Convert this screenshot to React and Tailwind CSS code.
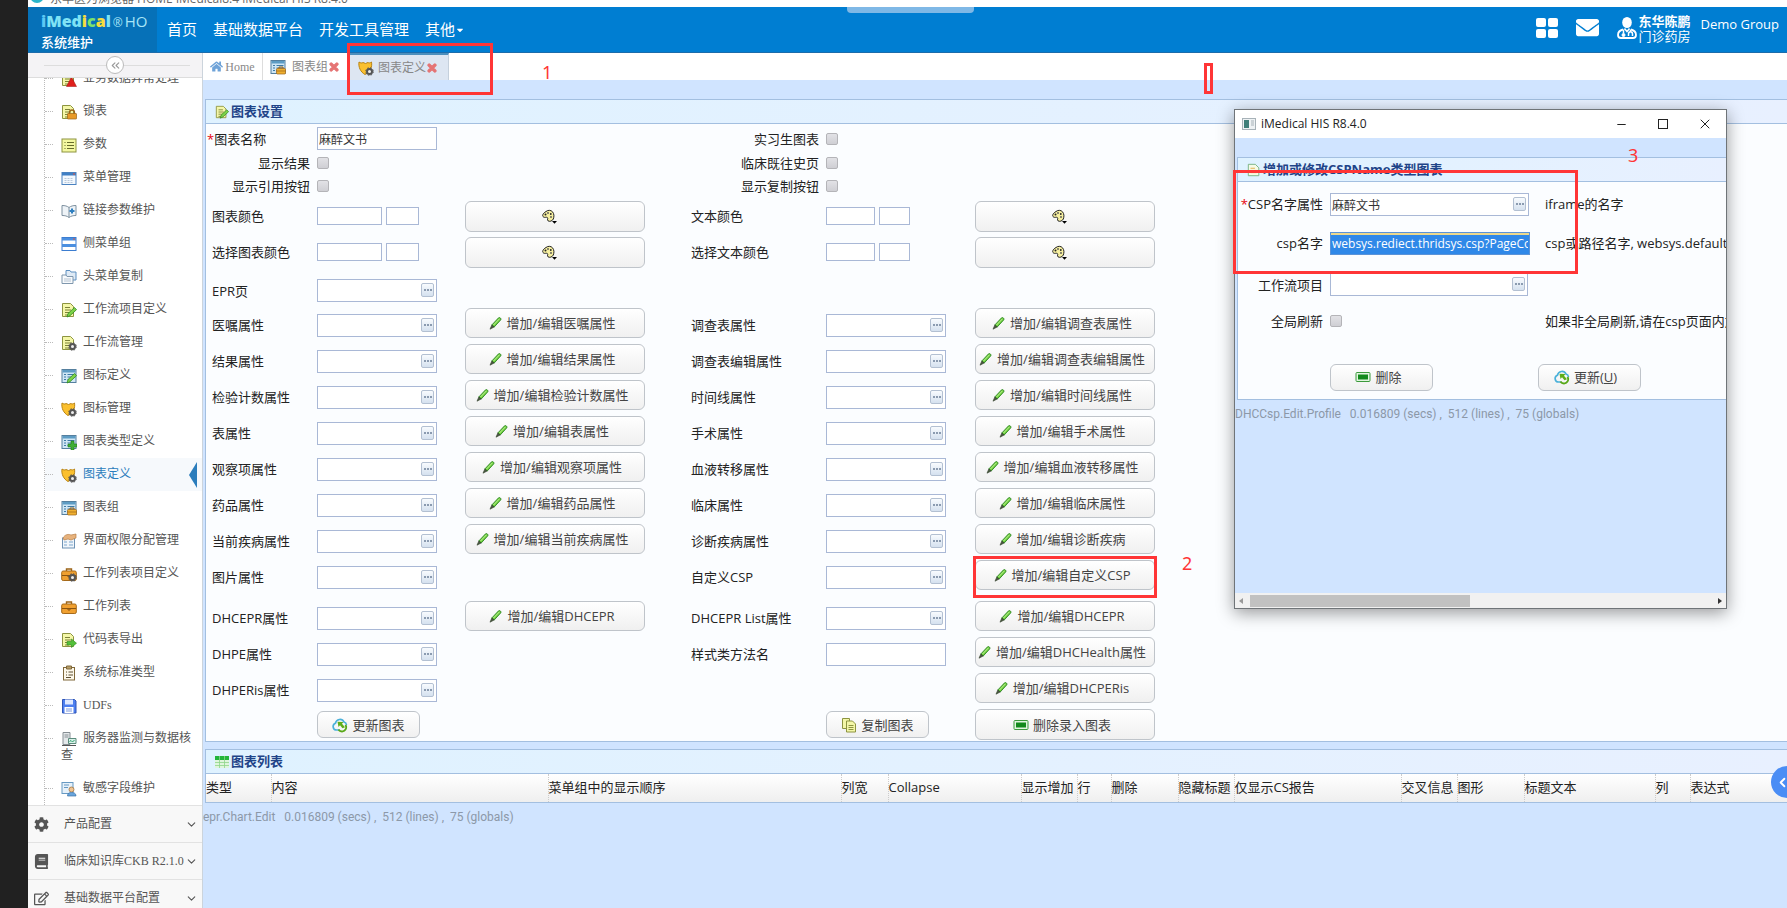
import React, { useState } from "react";
import clsx from "clsx";
import {
  FaHome,
  FaCog,
  FaBook,
  FaRegEdit,
  FaEnvelope,
  FaCaretDown,
  FaTimes,
} from "react-icons/fa";
import { ChevronDown, ChevronLeft, ChevronsLeft, Minus, X } from "lucide-react";

/* ---------- icons ---------- */

const bases = {
  page: (
    <>
      <path d="M1.5 1.5h8l3 3v10h-11z" fill="#f4f7a8" stroke="#8d9440" />
      <path d="M4 5.5h5M4 8h6M4 10.5h6M4 13h4" stroke="#7c8238" />
    </>
  ),
  note: (
    <>
      <path d="M1.5 1.500h8l4 4v9h-12z" fill="#f6fbe6" stroke="#6fae7c" />
      <path d="M4 6h5M4 8.500h7M4 11h7" stroke="#e0a63c" />
    </>
  ),
  list: (
    <>
      <rect x="1" y="2" width="14" height="13" fill="#f3f7a0" stroke="#8d9440" />
      <path d="M3.5 5.5h1M3.5 8.5h1M3.5 11.5h1M6 5.5h7M6 8.5h7M6 11.5h7" stroke="#666b2c" />
    </>
  ),
  window: (
    <>
      <rect x="1" y="2.5" width="14" height="12" fill="#f3f8fd" stroke="#4a82c0" />
      <path d="M1 3h14v2.5H1z" fill="#3f7fc4" />
      <path d="M12 4h2" stroke="#e2503c" />
      <path d="M3.5 8.5h9M3.5 10.5h9M3.5 12.5h9" stroke="#b9c9da" strokeDasharray="2 1" />
    </>
  ),
  rows: (
    <>
      <rect x="1" y="1.5" width="14" height="13" fill="#fff" stroke="#3c7dd0" />
      <path d="M1 2h14v2.5H1zM1 8h14v3H1z" fill="#4b8fe0" />
      <path d="M12 3h2" stroke="#e2503c" />
    </>
  ),
  book: (
    <>
      <path d="M1 2.5c3 0 5 .5 7 2 2-1.500 4-2 7-2v10c-3 0-5 .5-7 2-2-1.500-4-2-7-2z" fill="#eef3f7" stroke="#7d909f" />
      <path d="M8 4.500v10" stroke="#7d909f" />
      <path d="M8.500 8h5M11 5.500v5" stroke="#2f7fc0" strokeWidth="2" />
    </>
  ),
  folders: (
    <>
      <path d="M5 1.500h4l1 1.500h5v8H5z" fill="#dfeaf5" stroke="#5d8fc0" />
      <path d="M1 6h4l1 1.500h6v7H1z" fill="#f8fafc" stroke="#7f97ad" />
      <path d="M3 10h7M3 12h7" stroke="#b6c4d2" />
    </>
  ),
  chart: (
    <>
      <rect x="1" y="1.500" width="14" height="13" fill="#cfe6f5" stroke="#557f9e" />
      <path d="M1.500 2h13v2.500h-13z" fill="#5d9cc4" />
      <path d="M3 6.500h2M3 9h2M3 11.500h2M6.500 6.500h7M6.500 9h7M6.500 11.500h4" stroke="#3e7ba6" />
    </>
  ),
  shield: (
    <path
      d="M1 2c1.500 1.200 3 1.200 4 .5l2.500 1L10 2.500c1 .7 2 .5 3.500-.5.8 5-1 10-6.500 12.500C2.500 12 .2 7 1 2z"
      fill="#fbc02e"
      stroke="#b98415"
    />
  ),
  hand: (
    <>
      <rect x="1.500" y="5" width="12" height="10" fill="#f1f6fb" stroke="#6f93b5" />
      <path d="M3 9h3M3 12h3M8 9h4M8 12h4" stroke="#7aa5cc" />
      <path d="M2 5c2-4 6-4 8-3l5-1v4l-5 2-3-1-4 1z" fill="#e7b27c" stroke="#b97f48" strokeWidth=".7" />
    </>
  ),
  briefcase: (
    <>
      <path d="M5.500 5V3h5v2" fill="none" stroke="#9c6418" strokeWidth="1.400" />
      <rect x=".7" y="5" width="14.600" height="9.500" rx="1.500" fill="#f0a030" stroke="#a66a1a" />
      <path d="M1 9.500h14M7 9.500h2v1.500H7z" stroke="#8b5410" />
    </>
  ),
  clipboard: (
    <>
      <rect x="2.500" y="2.500" width="11" height="12.500" fill="#fdf8ea" stroke="#80683a" />
      <path d="M5.500 1h5v3h-5z" fill="#b9a06a" stroke="#80683a" />
      <path d="M5 7h1M5 10h1M7.500 7H12M7.500 10H12M5 12.500h5" stroke="#5d4f33" />
    </>
  ),
  floppy: (
    <>
      <path d="M1.500 1.500h12l1.500 1.500v12h-13.500z" fill="#4d7ff0" stroke="#2e55b8" />
      <path d="M4 1.500h8v5H4z" fill="#dfe9ff" />
      <path d="M3.500 9h9v6h-9z" fill="#fff" />
      <path d="M5 11h6M5 13h6" stroke="#7f9be0" />
    </>
  ),
  server: (
    <>
      <path d="M2 1.500h7v12H2z" fill="#e4e8ea" stroke="#868e93" />
      <path d="M3.500 4h4M3.500 6h4" stroke="#868e93" />
      <path d="M7.500 7.500h7.500v5H7.500z" fill="#d9f2e9" stroke="#5b8b7c" />
      <path d="M8.500 10.500l1.500-1 1.500 1.500 2-2" fill="none" stroke="#2d9d6b" />
      <path d="M1 14.500h14" stroke="#555" />
    </>
  ),
  user: (
    <>
      <rect x="1" y="1.500" width="11" height="11" fill="#e6f1fa" stroke="#6799c2" />
      <path d="M3 4h5M3 6.500h4" stroke="#6799c2" />
      <circle cx="10.500" cy="8.500" r="2.500" fill="#f0c492" stroke="#9b6a34" strokeWidth=".7" />
      <path d="M6.500 15c0-3 2-3.500 4-3.500s4.500.5 4.500 3.500z" fill="#6aa5dc" stroke="#3c73a8" strokeWidth=".7" />
    </>
  ),
};

const marks = {
  warn: <path d="M10.500 6l5 9.500h-10z" fill="#e0201c" stroke="#a01010" strokeWidth=".5" />,
  lock: (
    <>
      <path d="M8.500 10V8.500a2.500 2.500 0 015 0V10" fill="none" stroke="#9c6418" strokeWidth="1.300" />
      <rect x="6.500" y="9.500" width="9" height="5.500" rx=".5" fill="#e89a28" stroke="#9c6418" strokeWidth=".7" />
    </>
  ),
  case: (
    <>
      <path d="M9 9.500V8h4v1.500" fill="none" stroke="#9c6418" />
      <rect x="6.500" y="9.500" width="9" height="5.500" rx="1" fill="#f0b030" stroke="#9c6418" strokeWidth=".7" />
      <path d="M6.500 12h9" stroke="#9c6418" strokeWidth=".7" />
    </>
  ),
  pencil: <path d="M6 15l1-3.500 6.500-6 2 2.200-6.500 6z" fill="#7ed348" stroke="#2f8a1f" strokeWidth=".8" />,
  gear: (
    <>
      <circle cx="11.500" cy="11.500" r="2.500" fill="#eee" stroke="#555" strokeWidth="2" />
      <circle cx="11.500" cy="11.500" r="3.800" fill="none" stroke="#555" strokeWidth="1" strokeDasharray="1.600 1.400" />
    </>
  ),
  plus: <path d="M10 7h3v3h3v3h-3v3h-3v-3H7v-3h3z" fill="#3fae35" stroke="#1e7a1a" strokeWidth=".6" />,
  arrow: <path d="M6 9.500h4.500V7l5 4.200-5 4.300V13H6z" fill="#54bf3a" stroke="#2b8a1c" strokeWidth=".6" />,
};

function Glyph({ base, mark, className = "size-4" }) {
  return (
    <svg viewBox="0 0 16 16" className={clsx("shrink-0", className)} fill="none" aria-hidden="true">
      {bases[base]}
      {mark && marks[mark]}
    </svg>
  );
}

function PencilIcon() {
  return (
    <svg viewBox="0 0 14 14" className="size-3.5 shrink-0" aria-hidden="true">
      <path d="M2.800 9L9.600 1.800c1-.9 3 .8 2.200 2L5.200 11z" fill="#6fd03a" stroke="#2a8522" strokeWidth=".9" />
      <path d="M2.800 9l2.400 2L1 13.200z" fill="#4b5a40" stroke="#33402b" strokeWidth=".6" />
      <path d="M4.500 9L10.500 2.800" stroke="#c8f3a4" strokeWidth=".9" />
    </svg>
  );
}

function PaletteIcon() {
  return (
    <svg viewBox="0 0 16 16" className="size-4 shrink-0" aria-hidden="true">
      <path
        d="M5 2.500C7 .8 10 1 11.500 2.800c1.800 2 1.700 5 .8 7.200-.9 2-3.800 3-5.300 1.800-1.300-1 .4-2.300-.6-3.200S4 9 2.500 8 1.500 4.500 5 2.500z"
        fill="#f7f0a0"
        stroke="#222"
      />
      <circle cx="4.500" cy="5.500" r="1" fill="#222" />
      <circle cx="7" cy="4" r=".9" fill="#555" />
      <circle cx="9.800" cy="5" r=".9" fill="#222" />
      <circle cx="10" cy="8" r=".9" fill="#555" />
      <path d="M11 12h5l-2.500 2.800z" fill="#000" />
    </svg>
  );
}

function UpdateIcon() {
  return (
    <svg viewBox="0 0 16 16" className="size-4 shrink-0" aria-hidden="true">
      <path
        d="M7 13H4.500a3.500 3.500 0 01-1-6.800A4.500 4.500 0 0112 5a3.500 3.500 0 012.500 3"
        fill="none"
        stroke="#4bb1da"
        strokeWidth="1.700"
      />
      <path d="M13.500 8a4 4 0 11-7 4.500" fill="none" stroke="#58a818" strokeWidth="2" />
      <path d="M5.500 4.800l6 .2-1.500 1.800 3 3.400-2.500 1-2.500-3L6.500 10z" fill="#5fae1c" />
    </svg>
  );
}

function CopyIcon() {
  return (
    <svg viewBox="0 0 16 16" className="size-4 shrink-0" fill="#f4f7a8" stroke="#8d9440" aria-hidden="true">
      <path d="M1.500 1.500h7v10h-7z" />
      <path d="M5.500 4h6l3 3v8h-9z" />
      <path d="M7.500 8.500h5M7.500 10.500h5M7.500 12.500h5" />
    </svg>
  );
}

function DeleteIcon() {
  return (
    <svg viewBox="0 0 15 10" className="h-2.5 w-4 shrink-0" aria-hidden="true">
      <rect x=".5" y=".5" width="14" height="9" rx="1" fill="#e2f6e0" stroke="#3c9a3c" />
      <rect x="2.500" y="2.500" width="10" height="5" fill="#128a1c" />
    </svg>
  );
}

function TableIcon() {
  return (
    <svg viewBox="0 0 14 12" className="h-3 w-3.5 shrink-0" aria-hidden="true">
      <rect width="14" height="12" fill="#dff5dc" />
      <rect width="14" height="4" fill="#22b53a" />
      <path d="M0 6.500h14M0 9.500h14M4.500 0v12M9.500 0v12" stroke="#8ed58a" strokeWidth=".8" />
    </svg>
  );
}

function DoctorIcon() {
  return (
    <svg viewBox="0 0 20 22" className="mr-0.5 h-[22px] w-5 shrink-0" fill="none" stroke="#fff" aria-hidden="true">
      <ellipse cx="10" cy="5.500" rx="4.800" ry="5.500" fill="#fff" stroke="none" />
      <path d="M6 12.500c-3 .7-5 2.300-5 5.500 0 2 1 3 3 3h12c2 0 3-1 3-3 0-3.200-2-4.800-5-5.500" strokeWidth="1.800" />
      <path d="M6.500 12.500v4M13.500 12.500v2M11.500 19v-2c0-3 4-3 4 0v2M7.500 11.500l2.500 3 2.500-3" strokeWidth="1.500" />
      <circle cx="6.500" cy="18" r="1.500" fill="#fff" />
    </svg>
  );
}

/* ---------- shared controls ---------- */

const buttonIcons = {
  edit: <PencilIcon />,
  color: <PaletteIcon />,
  update: <UpdateIcon />,
  copy: <CopyIcon />,
  remove: <DeleteIcon />,
};

function Button({ icon, label, className, children }) {
  return (
    <button
      type="button"
      aria-label={label}
      className={clsx(
        "flex items-center justify-center gap-1 rounded-md border border-[#bfc4ca] bg-linear-to-b from-white to-[#f0f0f0] text-[13px] whitespace-nowrap text-[#444]",
        className
      )}
    >
      {buttonIcons[icon]}
      {children}
    </button>
  );
}

function TextField({ id, label, value = "", lookup = true, className }) {
  return (
    <div className={clsx("relative h-[23px]", className)}>
      <input
        id={id}
        aria-label={label}
        defaultValue={value}
        className="h-full w-full border border-[#a9b8d6] bg-white px-px pt-px text-xs text-[#333] outline-none"
      />
      {lookup && (
        <button
          type="button"
          aria-label={`${label} ...`}
          className="absolute top-1 right-[3px] flex h-3.5 w-[13px] items-center justify-center gap-px rounded-xs border border-[#b3c0d2] bg-linear-to-b from-[#f8fbfe] to-[#d5e1ef]"
        >
          <i className="size-0.5 bg-[#8b9bb0]" />
          <i className="size-0.5 bg-[#8b9bb0]" />
          <i className="size-0.5 bg-[#8b9bb0]" />
        </button>
      )}
    </div>
  );
}

function Checkbox({ id }) {
  return (
    <input
      id={id}
      type="checkbox"
      className="size-3 appearance-none rounded-xs border border-[#b4b4b8] bg-linear-to-b from-[#e2e2e6] to-[#cfcfd4] checked:bg-[#4a82c0]"
    />
  );
}

function PanelTitle({ icon, children }) {
  return (
    <h2 className="flex h-6 items-center gap-0.5 border-b border-[#a3bfe0] bg-linear-to-r from-[#dff2ff] to-[#e8f0ff] pl-[9px] text-[13px] font-bold text-[#1f4488]">
      {icon}
      {children}
    </h2>
  );
}

/* ---------- header ---------- */

const logoLetters = [
  ["i", "text-[#5cc8f5]"],
  ["Med", "text-[#7fe3f5]"],
  ["i", "text-[#f6dd3c]"],
  ["c", "text-[#7be36c]"],
  ["a", "text-[#f6dd3c]"],
  ["l", "text-[#7fe3f5]"],
];

function Header() {
  return (
    <header className="flex h-[46px] items-center border-b border-[#1c6cab] bg-[#007ed2] text-white">
      <div className="h-full w-[129px] bg-[#0671b8] pt-1 pl-[13px]">
        <p className="flex items-baseline text-base leading-5 text-[#a8e6f7]">
          <span className="font-black">
            {logoLetters.map(([letter, color], idx) => (
              <span key={idx} className={color}>
                {letter}
              </span>
            ))}
          </span>
          <span className="ml-0.5 text-xs">®</span>
          <span className="ml-0.5 text-[15px]">HO</span>
        </p>
        <p className="pt-px text-[13px] leading-5 font-medium">系统维护</p>
      </div>
      <nav className="flex flex-1 gap-4 pl-2.5 text-[15px]">
        <a href="#home">首页</a>
        <a href="#base">基础数据平台</a>
        <a href="#dev">开发工具管理</a>
        <a href="#other" className="flex items-center">
          其他
          <FaCaretDown className="size-2.5" />
        </a>
      </nav>
      <div className="flex items-center pr-2 pb-1">
        <button type="button" aria-label="Apps" className="mr-[18px] grid grid-cols-2 gap-0.5">
          <i className="h-[9px] w-2.5 rounded-xs bg-white" />
          <i className="h-[9px] w-2.5 rounded-xs bg-white" />
          <i className="h-[9px] w-2.5 rounded-xs bg-white" />
          <i className="h-[9px] w-2.5 rounded-xs bg-white" />
        </button>
        <button type="button" aria-label="Mail" className="mr-[18px]">
          <FaEnvelope className="size-[23px]" />
        </button>
        <DoctorIcon />
        <p className="mr-2.5 pt-0.5 text-[13px] leading-[15px]">
          <b className="block">东华陈鹏</b>
          <span className="block">门诊药房</span>
        </p>
        <p className="pb-1.5 text-[13px]">Demo Group</p>
      </div>
    </header>
  );
}

/* ---------- sidebar ---------- */

const menuItems = [
  { text: "业务数据异常处理", base: "page", mark: "warn" },
  { text: "锁表", base: "page", mark: "lock" },
  { text: "参数", base: "list" },
  { text: "菜单管理", base: "window" },
  { text: "链接参数维护", base: "book" },
  { text: "侧菜单组", base: "rows" },
  { text: "头菜单复制", base: "folders" },
  { text: "工作流项目定义", base: "page", mark: "pencil" },
  { text: "工作流管理", base: "page", mark: "gear" },
  { text: "图标定义", base: "chart", mark: "pencil" },
  { text: "图标管理", base: "shield", mark: "gear" },
  { text: "图表类型定义", base: "chart", mark: "plus" },
  { text: "图表定义", base: "shield", mark: "gear" },
  { text: "图表组", base: "chart", mark: "case" },
  { text: "界面权限分配管理", base: "hand" },
  { text: "工作列表项目定义", base: "briefcase", mark: "gear" },
  { text: "工作列表", base: "briefcase" },
  { text: "代码表导出", base: "page", mark: "arrow" },
  { text: "系统标准类型", base: "clipboard" },
  { text: "UDFs", base: "floppy" },
  { text: "服务器监测与数据核查", base: "server" },
  { text: "敏感字段维护", base: "user" },
];

const groups = [
  { text: "产品配置", Icon: FaCog },
  { text: "临床知识库CKB R2.1.0", Icon: FaBook },
  { text: "基础数据平台配置", Icon: FaRegEdit },
];

function Sidebar() {
  const [active, setActive] = useState("图表定义");

  return (
    <aside className="w-[175px] shrink-0 border-r border-[#ccd4dc] bg-white font-['Liberation_Serif','Noto_Sans_CJK_SC',serif] text-xs text-[#555]">
      <div className="relative z-10 flex h-[25px] items-center border-b border-[#ddd] bg-[#f4f3f5] pr-3 pl-4">
        <span className="h-px w-[62px] bg-[#ddd]" />
        <button
          type="button"
          aria-label="Collapse menu"
          className="flex size-[18px] items-center justify-center rounded-full border border-[#bbb] bg-white text-[#999]"
        >
          <ChevronsLeft size={13} />
        </button>
        <span className="h-px flex-1 bg-[#ddd]" />
      </div>
      <div className="overflow-hidden">
        {/* the list is scrolled by half an item */}
        <ul className="-mt-4 ml-4 border-l border-dotted border-[#bbb]">
          {menuItems.map(({ text, base, mark }) => (
            <li key={text} className="relative">
              <span className="absolute top-4 left-0 w-2 border-t border-dotted border-[#bbb]" />
              <a
                href="#menu"
                onClick={() => setActive(text)}
                className={clsx(
                  "block py-2 pl-4 leading-[17px]",
                  active === text && "bg-[#f6f9fc] text-[#2b7dbc]"
                )}
              >
                <Glyph base={base} mark={mark} className="-my-1 mr-1.5 inline size-4 align-middle" />
                {text}
              </a>
              {active === text && (
                <span className="absolute top-1 right-[5px] border-y-[13px] border-r-8 border-y-transparent border-r-[#2b7dbc]" />
              )}
            </li>
          ))}
        </ul>
      </div>
      {groups.map(({ text, Icon }) => (
        <button
          key={text}
          type="button"
          className="flex h-[37px] w-full items-center border-t border-[#e2e2e2] bg-[#f8f8f8] pl-1.5 text-left"
        >
          <Icon className="mr-[15px] size-[15px]" />
          <span className="flex-1 whitespace-nowrap">{text}</span>
          <ChevronDown size={13} className="mr-1 shrink-0" />
        </button>
      ))}
    </aside>
  );
}

/* ---------- tabs ---------- */

function CloseMark() {
  return <FaTimes className="size-3 text-[#e57373]" stroke="currentColor" strokeWidth="50" />;
}

function Tabs() {
  return (
    <div className="flex h-[27px] bg-white font-['Liberation_Serif','Noto_Sans_CJK_SC',serif] text-xs text-[#888]">
      <a href="#home" className="flex w-[60px] items-center justify-center gap-0.5 border-r border-[#ddd]">
        <FaHome className="size-[13px] text-[#6fa3d8]" />
        Home
      </a>
      <a href="#group" className="flex items-center gap-1.5 pr-2 pl-[7px]">
        <Glyph base="chart" mark="case" />
        <span className="flex items-center">
          图表组
          <CloseMark />
        </span>
      </a>
      <a
        href="#define"
        className="flex items-center gap-1 border-t-2 border-r border-t-[#4c8fbd] border-r-[#c5d0dc] bg-[#dde6f2] px-2.5"
      >
        <Glyph base="shield" mark="gear" />
        <span className="flex items-center">
          图表定义
          <CloseMark />
        </span>
      </a>
    </div>
  );
}

/* ---------- chart form ---------- */

const chartRows = [
  { left: ["EPR页"], right: null, height: "h-[37px] pt-1" },
  { left: ["医嘱属性", "增加/编辑医嘱属性"], right: ["调查表属性", "增加/编辑调查表属性"] },
  { left: ["结果属性", "增加/编辑结果属性"], right: ["调查表编辑属性", "增加/编辑调查表编辑属性"] },
  { left: ["检验计数属性", "增加/编辑检验计数属性"], right: ["时间线属性", "增加/编辑时间线属性"] },
  { left: ["表属性", "增加/编辑表属性"], right: ["手术属性", "增加/编辑手术属性"] },
  { left: ["观察项属性", "增加/编辑观察项属性"], right: ["血液转移属性", "增加/编辑血液转移属性"] },
  { left: ["药品属性", "增加/编辑药品属性"], right: ["临床属性", "增加/编辑临床属性"] },
  { left: ["当前疾病属性", "增加/编辑当前疾病属性"], right: ["诊断疾病属性", "增加/编辑诊断疾病"] },
  { left: ["图片属性"], right: ["自定义CSP", "增加/编辑自定义CSP"], height: "h-9 mb-[5px]" },
  { left: ["DHCEPR属性", "增加/编辑DHCEPR"], right: ["DHCEPR List属性", "增加/编辑DHCEPR"] },
  { left: ["DHPE属性"], right: ["样式类方法名", "增加/编辑DHCHealth属性"], plainRight: true },
  { left: ["DHPERis属性"], right: [null, "增加/编辑DHCPERis"] },
];

const rowGrid = "grid grid-cols-[111px_148px_226px_135px_149px_1fr] items-center";

function FieldCells({ id, label, action, lookup = true, highlight, indent }) {
  return (
    <>
      {label ? (
        <label htmlFor={id} className={indent}>
          {label}
        </label>
      ) : (
        <span />
      )}
      {label ? <TextField id={id} label={label} lookup={lookup} className="w-[120px]" /> : <span />}
      {action ? (
        <div className="relative w-[180px] pb-1">
          <Button icon="edit" className="h-[30px] w-full pr-1.5">
            {action}
          </Button>
          {highlight && (
            <span className="pointer-events-none absolute -inset-x-0.5 -top-1 -bottom-1 border-3 border-[#ff3536]" />
          )}
        </div>
      ) : (
        <span />
      )}
    </>
  );
}

function ColorCells({ label, wide, indent }) {
  return (
    <>
      <span className={indent}>{label}</span>
      <span className="flex gap-1">
        <input
          aria-label={label}
          className={clsx("h-[18px] border border-[#a9b8d6] bg-white", wide ? "w-[65px]" : "w-[49px]")}
        />
        <input
          aria-label={`${label} 2`}
          className={clsx("h-[18px] border border-[#a9b8d6] bg-white", wide ? "w-[33px]" : "w-[31px]")}
        />
      </span>
      <Button icon="color" label={label} className="h-[31px] w-[180px] pt-0.5 pr-3" />
    </>
  );
}

function CheckCells({ id, label }) {
  return (
    <>
      <label htmlFor={id} className="pr-[7px] text-right">
        {label}
      </label>
      <Checkbox id={id} />
      <span />
    </>
  );
}

function ChartForm() {
  return (
    <section className="border border-r-0 border-[#a3bfe0] bg-[#fbfdff]">
      <PanelTitle icon={<Glyph base="page" mark="pencil" className="size-3.5" />}>图表设置</PanelTitle>
      <form className="text-[13px] leading-5 text-[#222]">
        <div className={clsx(rowGrid, "h-[29px]")}>
          <label htmlFor="chartName" className="pl-px">
            <span className="text-red-600">*</span>图表名称
          </label>
          <TextField id="chartName" label="图表名称" value="麻醉文书" lookup={false} className="w-[120px]" />
          <span />
          <CheckCells id="intern" label="实习生图表" />
        </div>
        <div className={clsx(rowGrid, "h-5")}>
          <CheckCells id="showResult" label="显示结果" />
          <CheckCells id="history" label="临床既往史页" />
        </div>
        <div className={clsx(rowGrid, "h-[25px]")}>
          <CheckCells id="showQuote" label="显示引用按钮" />
          <CheckCells id="showCopy" label="显示复制按钮" />
        </div>
        <div className={clsx(rowGrid, "h-9")}>
          <ColorCells label="图表颜色" wide indent="pl-1.5" />
          <ColorCells label="文本颜色" />
        </div>
        <div className={clsx(rowGrid, "h-9")}>
          <ColorCells label="选择图表颜色" wide indent="pl-1.5" />
          <ColorCells label="选择文本颜色" />
        </div>
        {chartRows.map(({ left, right, height, plainRight }, idx) => (
          <div key={idx} className={clsx(rowGrid, height ?? "h-9")}>
            <FieldCells id={`left${idx}`} label={left[0]} action={left[1]} indent="pl-1.5" />
            {right && (
              <FieldCells
                id={`right${idx}`}
                label={right[0]}
                action={right[1]}
                lookup={!plainRight}
                highlight={right[0] === "自定义CSP"}
              />
            )}
          </div>
        ))}
        <div className={clsx(rowGrid, "h-[33px]")}>
          <span />
          <Button icon="update" className="h-[27px] w-[103px]">
            更新图表
          </Button>
          <span />
          <span />
          <Button icon="copy" className="h-[27px] w-[103px]">
            复制图表
          </Button>
          <Button icon="remove" className="h-[31px] w-[180px] pr-1.5">
            删除录入图表
          </Button>
        </div>
      </form>
    </section>
  );
}

/* ---------- chart list ---------- */

const columns = [
  ["类型", "w-[65px]"],
  ["内容", "w-[277px]"],
  ["菜单组中的显示顺序", "w-[293px]"],
  ["列宽", "w-[47px]"],
  ["Collapse", "w-[133px]"],
  ["显示增加", "w-[56px]"],
  ["行", "w-[34px]"],
  ["删除", "w-[67px]"],
  ["隐藏标题", "w-[56px]"],
  ["仅显示CS报告", "w-[167px]"],
  ["交叉信息", "w-[56px]"],
  ["图形", "w-[67px]"],
  ["标题文本", "w-[131px]"],
  ["列", "w-[35px]"],
  ["表达式", ""],
];

function ChartList() {
  return (
    <section className="mt-[7px] border border-r-0 border-[#a3bfe0]">
      <PanelTitle icon={<TableIcon />}>图表列表</PanelTitle>
      <table className="w-full table-fixed border-collapse bg-linear-to-b from-white to-[#efefef] text-[13px] text-[#222]">
        <thead>
          <tr className="h-7">
            {columns.map(([title, width], idx) => (
              <th
                key={title}
                className={clsx(
                  "p-0 text-left font-normal whitespace-nowrap",
                  idx > 0 && "border-l border-dotted border-[#ccc]",
                  width
                )}
              >
                {title}
              </th>
            ))}
          </tr>
        </thead>
      </table>
    </section>
  );
}

function StatusLine({ name }) {
  return (
    <p className="mt-1 font-['Roboto'] text-xs leading-5 whitespace-pre text-[#8c98a8]">
      {`${name}   0.016809 (secs) ,  512 (lines) ,  75 (globals)`}
    </p>
  );
}

/* ---------- CSP window ---------- */

function CspWindow() {
  const row = "grid grid-cols-[85px_208px_1fr] items-center gap-x-[7px]";

  return (
    <div
      role="dialog"
      aria-label="iMedical HIS R8.4.0"
      className="absolute top-[109px] right-[60px] flex h-[500px] w-[493px] flex-col overflow-hidden border border-[#6f7478] bg-[#d0e4ff] shadow-[0_4px_16px_rgba(0,0,0,0.4)]"
    >
      <div className="flex h-7 shrink-0 items-center bg-white pl-[7px] text-xs text-[#222]">
        <svg viewBox="0 0 14 12" className="mr-[5px] h-3 w-3.5" aria-hidden="true">
          <rect x=".5" y=".5" width="13" height="11" fill="#eef2f4" stroke="#a7b2b8" />
          <rect x="2" y="2" width="5" height="8" fill="#3f7f79" />
          <path d="M9 3h3M9 5h3M9 7h3" stroke="#a7b2b8" />
        </svg>
        <span className="flex-1">iMedical HIS R8.4.0</span>
        <button type="button" aria-label="Minimize" className="flex w-[42px] justify-center">
          <Minus size={13} strokeWidth={2} />
        </button>
        <button type="button" aria-label="Maximize" className="flex w-[42px] justify-center">
          <i className="size-2.5 border border-[#222]" />
        </button>
        <button type="button" aria-label="Close" className="flex w-[42px] justify-center">
          <X size={16} strokeWidth={1.5} />
        </button>
      </div>
      <div className="flex-1 pt-[19px]">
        <section className="ml-0.5 border border-r-0 border-[#a3bfe0] bg-[#fbfdff]">
          <PanelTitle icon={<Glyph base="note" className="size-3.5" />}>增加或修改CSPName类型图表</PanelTitle>
          <form className="text-[13px] leading-5 whitespace-nowrap text-[#222]">
            <div className={clsx(row, "h-11")}>
              <label htmlFor="cspAttr" className="text-right">
                <span className="text-red-600">*</span>CSP名字属性
              </label>
              <TextField id="cspAttr" label="CSP名字属性" value="麻醉文书" className="w-[199px]" />
              <span>iframe的名字</span>
            </div>
            <div className={clsx(row, "h-[34px]")}>
              <label htmlFor="cspName" className="text-right">
                csp名字
              </label>
              <input
                id="cspName"
                defaultValue="websys.rediect.thridsys.csp?PageCode"
                className="h-[23px] w-[200px] border border-[#5a93d8] bg-[#2f88e8] px-px text-xs text-white inset-shadow-[0_2px_0_#ecd88c] outline-none"
              />
              <span>csp或路径名字, websys.default.csp</span>
            </div>
            <div className={clsx(row, "h-[49px]")}>
              <label htmlFor="flowItem" className="text-right">
                工作流项目
              </label>
              <TextField id="flowItem" label="工作流项目" className="w-[198px]" />
            </div>
            <div className={clsx(row, "h-6")}>
              <label htmlFor="globalRefresh" className="text-right">
                全局刷新
              </label>
              <Checkbox id="globalRefresh" />
              <span>如果非全局刷新,请在csp页面内加</span>
            </div>
            <div className="mt-[22px] flex h-11 items-center gap-[105px] pl-[92px]">
              <Button icon="remove" className="h-[27px] w-[103px] pr-1.5">
                删除
              </Button>
              <Button icon="update" className="h-[27px] w-[103px] pr-2">
                <span>
                  更新(<u>U</u>)
                </span>
              </Button>
            </div>
          </form>
        </section>
        <StatusLine name="DHCCsp.Edit.Profile" />
      </div>
      <div className="flex h-[15px] shrink-0 items-center bg-[#f1f1f1] px-1">
        <span className="border-y-3 border-r-4 border-y-transparent border-r-[#999]" />
        <span className="ml-[7px] h-3 w-[220px] bg-[#c1c1c1]" />
        <span className="ml-auto border-y-3 border-l-4 border-y-transparent border-l-[#333]" />
      </div>
    </div>
  );
}

/* ---------- review marks drawn over the page ---------- */

function Annotations() {
  return (
    <div className="pointer-events-none font-['Noto_Sans'] text-lg leading-5 text-[#ff3536]">
      <span className="absolute top-[43px] left-[347px] h-[52px] w-[146px] border-3" />
      <span className="absolute top-[62px] left-[542px]">1</span>
      <span className="absolute top-[63px] left-[1204px] h-[31px] w-[9px] border-3" />
      <span className="absolute top-[553px] left-[1182px]">2</span>
      <span className="absolute top-[170px] left-[1233px] h-[104px] w-[345px] border-3" />
      <span className="absolute top-[145px] left-[1628px]">3</span>
    </div>
  );
}

export default function App() {
  return (
    <div className="relative flex h-screen overflow-hidden bg-[#212121] pl-7 font-['Open_Sans','Noto_Sans_CJK_SC',sans-serif]">
      <div className="flex min-w-0 flex-1 flex-col bg-white">
        <div className="flex h-[7px] shrink-0 items-end gap-1.5 overflow-hidden pl-0.5 text-xs leading-4 whitespace-nowrap text-[#666]">
          <span className="mb-1 size-3.5 shrink-0 rounded-full bg-[#2bb5c9]" />
          <span>东华医为浏览器 HOME iMedical8.4 iMedical HIS R8.4.0</span>
        </div>
        <Header />
        <div className="flex min-h-0 flex-1">
          <Sidebar />
          <main className="min-w-0 flex-1 bg-[#d0e4ff]">
            <Tabs />
            <div className="mt-[19px] ml-0.5">
              <ChartForm />
              <ChartList />
            </div>
            <StatusLine name="epr.Chart.Edit" />
          </main>
        </div>
      </div>
      <div className="absolute top-[7px] left-[847px] h-1.5 w-[127px] rounded-b-sm bg-[#7fb8e6]" />
      <CspWindow />
      <button
        type="button"
        aria-label="Open side panel"
        className="absolute top-[766px] -right-4 flex size-8 items-center rounded-full bg-[#4a8df5] pl-1 text-white"
      >
        <ChevronLeft size={15} strokeWidth={3} />
      </button>
      <Annotations />
    </div>
  );
}
